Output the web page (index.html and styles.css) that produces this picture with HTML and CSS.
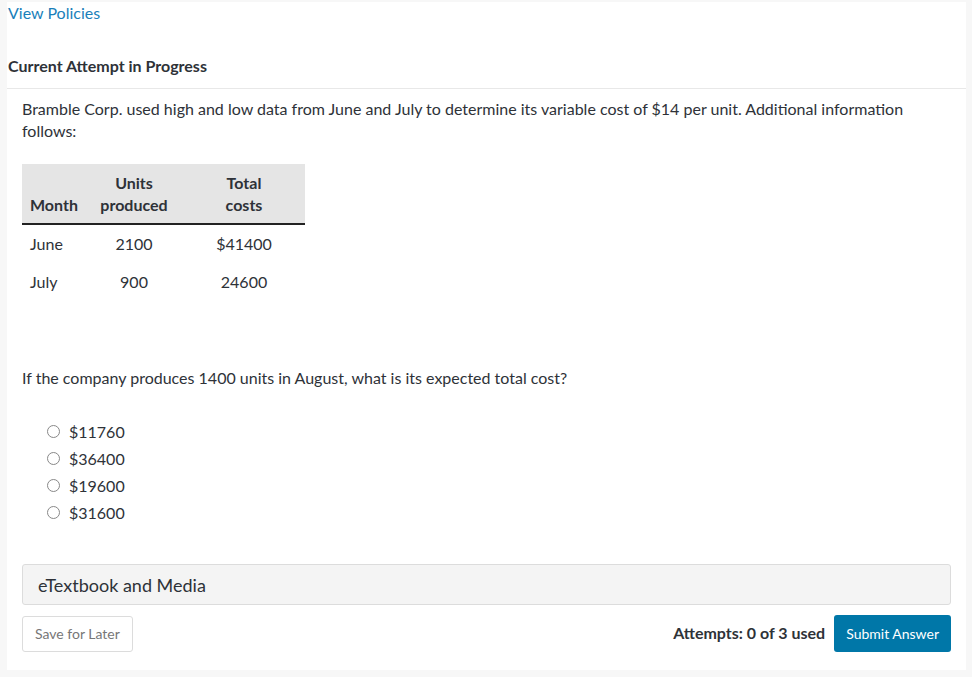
FILE: index.html
```html
<!DOCTYPE html>
<html>
<head>
<meta charset="utf-8">
<link rel="stylesheet" href="styles.css">
</head>
<body>
<div class="panel">
  <a class="policies" href="#">View Policies</a>
  <h2 class="attempt-title">Current Attempt in Progress</h2>
  <div class="question">
    <p class="intro">Bramble Corp. used high and low data from June and July to determine its variable cost of $14 per unit. Additional information follows:</p>
    <table class="data">
      <colgroup>
        <col class="c1"><col class="c2"><col class="c3">
      </colgroup>
      <thead>
        <tr><th class="left">Month</th><th>Units<br>produced</th><th>Total<br>costs</th></tr>
      </thead>
      <tbody>
        <tr><td class="left">June</td><td>2100</td><td>$41400</td></tr>
        <tr><td class="left">July</td><td>900</td><td>24600</td></tr>
      </tbody>
    </table>
    <p class="ask">If the company produces 1400 units in August, what is its expected total cost?</p>
    <ul class="options">
      <li><span class="radio"></span>$11760</li>
      <li><span class="radio"></span>$36400</li>
      <li><span class="radio"></span>$19600</li>
      <li><span class="radio"></span>$31600</li>
    </ul>
    <div class="media">eTextbook and Media</div>
    <div class="actions">
      <button class="save">Save for Later</button>
      <div class="right">
        <span class="attempts">Attempts: 0 of 3 used</span>
        <button class="submit">Submit Answer</button>
      </div>
    </div>
  </div>
</div>
</body>
</html>
```

FILE: styles.css
```css
html, body {
  margin: 0;
  padding: 0;
  background: #f7f7f7;
}
body {
  font-family: Lato, "Open Sans", sans-serif;
  color: #2e3238;
  padding: 2px 6px 7px 7px;
}
.panel {
  background: #fff;
  height: 668px;
  box-sizing: border-box;
  padding-top: 1px;
}
.policies {
  display: inline-block;
  margin-left: 1px;
  font-size: 16px;
  color: #1a7fba;
  text-decoration: none;
  line-height: 20px;
}
.attempt-title {
  font-size: 16px;
  font-weight: 700;
  margin: 0;
  padding: 33px 0 12px 1px;
  line-height: 20px;
  border-bottom: 1px solid #e8e8e8;
}
.question {
  padding: 0 15px 0 15px;
}
.intro {
  font-size: 16px;
  line-height: 22px;
  margin: 9px 0 0 0;
  padding-right: 40px;
}
.data {
  border-collapse: collapse;
  table-layout: fixed;
  margin-top: 22px;
  font-size: 16px;
  width: 283px;
}
.data .c1 { width: 63px; }
.data .c2 { width: 98px; }
.data .c3 { width: 122px; }
.data th {
  background: #e5e5e5;
  font-weight: 700;
  line-height: 22px;
  padding: 8px 0 7px 0;
  text-align: center;
  border-bottom: 2px solid #222;
  vertical-align: bottom;
}
.data td {
  text-align: center;
  line-height: 20px;
  padding: 9px 0 9px 0;
}
.data .left { text-align: left; padding-left: 8px; }
.ask {
  font-size: 16px;
  line-height: 22px;
  margin: 66px 0 0 0;
}
.options {
  list-style: none;
  margin: 29px 0 0 0;
  padding: 0 0 0 25px;
}
.options li {
  display: flex;
  align-items: center;
  font-size: 16px;
  height: 27px;
}
.radio {
  width: 11px;
  height: 11px;
  border: 1px solid #888;
  border-radius: 50%;
  margin-right: 9px;
  flex: none;
}
.media {
  margin-top: 38px;
  background: #f4f4f4;
  border: 1px solid #dcdcdc;
  border-radius: 3px;
  height: 41px;
  box-sizing: border-box;
  padding: 0 15px;
  display: flex;
  align-items: center;
  font-size: 18px;
  color: #2e3238;
}
.actions {
  display: flex;
  justify-content: space-between;
  align-items: center;
  margin-top: 10px;
}
.save {
  font-family: Lato, "Open Sans", sans-serif;
  font-size: 14px;
  color: #777;
  background: #fff;
  border: 1px solid #dcdcdc;
  border-radius: 3px;
  height: 36px;
  padding: 0 12px;
}
.right {
  display: flex;
  align-items: center;
  gap: 9px;
}
.attempts {
  font-size: 16px;
  font-weight: 700;
  margin-top: -3px;
}
.submit {
  font-family: Lato, "Open Sans", sans-serif;
  font-size: 14px;
  color: #fff;
  background: #0077a8;
  border: none;
  border-radius: 3px;
  height: 37px;
  padding: 0 12px;
}
```
